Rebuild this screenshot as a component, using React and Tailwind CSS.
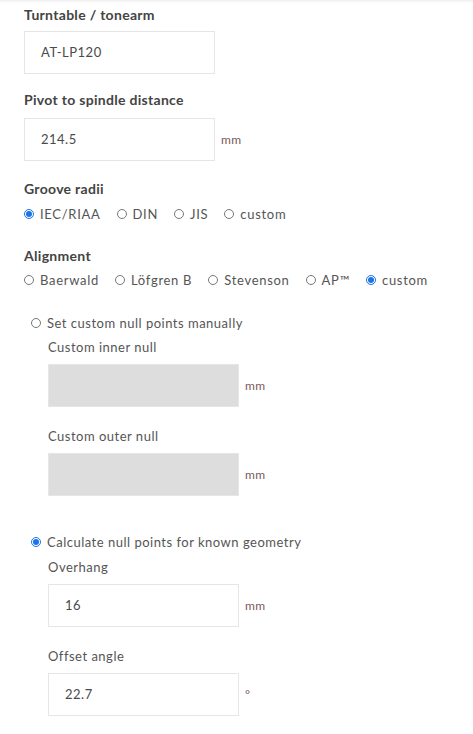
import React from "react";

const font = { fontFamily: "Lato, 'Noto Sans', sans-serif" };

function Radio({ checked }) {
  return checked ? (
    <span className="w-[10px] h-[10px] rounded-full border border-[#1a73e8] bg-white flex items-center justify-center shrink-0">
      <span className="block w-[6px] h-[6px] rounded-full bg-[#1a73e8]" />
    </span>
  ) : (
    <span className="inline-block w-[10px] h-[10px] rounded-full border border-[#777] bg-white shrink-0" />
  );
}

function Opt({ checked, children }) {
  return (
    <label className="flex items-center gap-[6px]">
      <Radio checked={checked} />
      <span>{children}</span>
    </label>
  );
}

function Input({ value, gray, unit }) {
  return (
    <div className="flex items-center">
      <div
        className={
          "w-[191px] h-[43px] border border-[#e6e6e6] flex items-center pl-[16px] text-[13px] text-[#4a4a4a] " +
          (gray ? "bg-[#dddddd]" : "bg-white")
        }
      >
        {value}
      </div>
      {unit && <span className="ml-[6px] text-[12px] text-[#7a5a5a]">{unit}</span>}
    </div>
  );
}

function Label({ children, className = "" }) {
  return (
    <div className={"font-bold text-[#444] text-[14px] tracking-[0.3px] leading-[16px] " + className}>
      {children}
    </div>
  );
}

export default function App() {
  return (
    <div
      className="w-[473px] h-[734px] bg-white relative text-[#555] text-[13px] tracking-[0.5px]"
      style={font}
    >
      <div className="h-[3px] bg-gradient-to-b from-[#eeeeee] to-white" />
      <div className="pl-[24px]">
        <Label className="mt-[4px]">Turntable / tonearm</Label>
        <div className="mt-[8px]"><Input value="AT-LP120" /></div>

        <Label className="mt-[18px]">Pivot to spindle distance</Label>
        <div className="mt-[10px]"><Input value="214.5" unit="mm" /></div>

        <Label className="mt-[20px]">Groove radii</Label>
        <div className="flex gap-[16px] mt-[9px] leading-[16px] tracking-[0.7px]">
          <Opt checked>IEC/RIAA</Opt>
          <Opt>DIN</Opt>
          <Opt>JIS</Opt>
          <Opt>custom</Opt>
        </div>

        <Label className="mt-[26px]">Alignment</Label>
        <div className="flex gap-[16px] mt-[8px] leading-[16px] tracking-[0.7px]">
          <Opt>Baerwald</Opt>
          <Opt>Löfgren B</Opt>
          <Opt>Stevenson</Opt>
          <Opt>AP™</Opt>
          <Opt checked>custom</Opt>
        </div>

        <div className="pl-[7px] mt-[27px]">
          <div className="leading-[16px]"><Opt>Set custom null points manually</Opt></div>
          <div className="pl-[17px]">
            <div className="mt-[8px] leading-[16px]">Custom inner null</div>
            <div className="mt-[9px]"><Input gray unit="mm" /></div>
            <div className="mt-[21px] leading-[16px]">Custom outer null</div>
            <div className="mt-[9px]"><Input gray unit="mm" /></div>
          </div>

          <div className="mt-[38px] leading-[16px]"><Opt checked>Calculate null points for known geometry</Opt></div>
          <div className="pl-[17px]">
            <div className="mt-[9px] leading-[16px]">Overhang</div>
            <div className="mt-[9px]"><Input value="16" unit="mm" /></div>
            <div className="mt-[21px] leading-[16px]">Offset angle</div>
            <div className="mt-[9px]"><Input value="22.7" unit="°" /></div>
          </div>
        </div>
      </div>
    </div>
  );
}
